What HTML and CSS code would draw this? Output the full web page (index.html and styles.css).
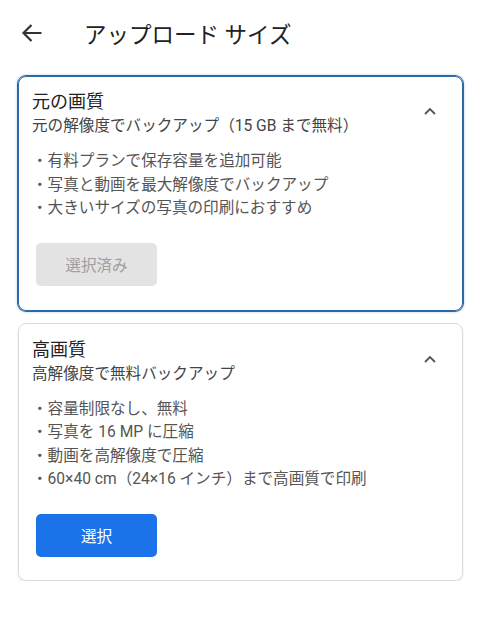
FILE: index.html
```html
<!DOCTYPE html>
<html lang="ja">
<head>
  <meta charset="UTF-8"/>
  <meta name="viewport" content="width=device-width, initial-scale=1.0"/>
  <title>アップロード サイズ</title>
  <link rel="stylesheet" href="styles.css">
</head>
<body>
  <header class="app-bar">
    <button class="back-btn" aria-label="戻る">
      <svg width="22" height="20" viewBox="0 0 22 20">
        <path d="M20.5 10H2.5M10.5 2L2.5 10l8 8" fill="none" stroke="#333" stroke-width="2.2"/>
      </svg>
    </button>
    <h1>アップロード サイズ</h1>
  </header>

  <main class="options">
    <!-- 元の画質 -->
    <section class="option selected">
      <div class="option-head">
        <div>
          <h2>元の画質</h2>
          <p class="sub">元の解像度でバックアップ（15 GB まで無料）</p>
        </div>
        <svg class="chevron" width="14" height="10" viewBox="0 0 14 10">
          <path d="M2 8l5-5 5 5" fill="none" stroke="#555" stroke-width="1.8"/>
        </svg>
      </div>
      <ul>
        <li>・有料プランで保存容量を追加可能</li>
        <li>・写真と動画を最大解像度でバックアップ</li>
        <li>・大きいサイズの写真の印刷におすすめ</li>
      </ul>
      <button class="btn btn-disabled">選択済み</button>
    </section>

    <!-- 高画質 -->
    <section class="option">
      <div class="option-head">
        <div>
          <h2>高画質</h2>
          <p class="sub">高解像度で無料バックアップ</p>
        </div>
        <svg class="chevron" width="14" height="10" viewBox="0 0 14 10">
          <path d="M2 8l5-5 5 5" fill="none" stroke="#555" stroke-width="1.8"/>
        </svg>
      </div>
      <ul>
        <li>・容量制限なし、無料</li>
        <li>・写真を 16 MP に圧縮</li>
        <li>・動画を高解像度で圧縮</li>
        <li>・60×40 cm（24×16 インチ）まで高画質で印刷</li>
      </ul>
      <button class="btn btn-primary">選択</button>
    </section>
  </main>
</body>
</html>
```

FILE: styles.css
```css
:root {
  --blue: #1a73e8;
  --selected: #2b6aa5;
  --border: #dcdcdc;
  --text: #202124;
  --text-sub: #444444;
  --text-muted: #555555;
}

*, *::before, *::after {
  margin: 0;
  padding: 0;
  box-sizing: border-box;
}

body {
  font-family: Roboto, "Noto Sans CJK JP", sans-serif;
  background: #ffffff;
  color: var(--text);
}

/*—— APP BAR ——*/
.app-bar {
  display: flex;
  align-items: center;
  height: 48px;
  margin-top: 9px;
  padding-left: 21px;
}
.back-btn {
  display: flex;
  background: none;
  border: none;
  cursor: pointer;
}
.app-bar h1 {
  margin-left: 41px;
  font-size: 22.5px;
  font-weight: 400;
  color: #222;
}

/*—— OPTIONS ——*/
.options {
  display: flex;
  flex-direction: column;
  gap: 12px;
  padding: 19px 17px 0 18px;
}
.option {
  border: 1px solid var(--border);
  border-radius: 8px;
  padding: 14px 13px 23px;
  box-shadow: 0 1px 2px rgba(0,0,0,0.12);
}
.option.selected {
  border-color: var(--selected);
  box-shadow: 0 0 0 1px var(--selected), 0 0 2px 2px rgba(120,170,220,0.25);
  padding-top: 13px;
  padding-bottom: 24px;
}
.option-head {
  display: flex;
  align-items: center;
  justify-content: space-between;
}
.chevron {
  margin: 0 12px 6px 0;
}
.option h2 {
  font-size: 18px;
  font-weight: 400;
  line-height: 24px;
  color: var(--text);
}
.sub {
  font-size: 15.6px;
  line-height: 24px;
  color: var(--text-sub);
}
.option ul {
  list-style: none;
  margin-top: 12px;
}
.option li {
  font-size: 15.6px;
  line-height: 23.5px;
  color: var(--text-muted);
}

/*—— BUTTONS ——*/
.btn {
  display: block;
  width: 121px;
  height: 43px;
  margin: 22px 0 0 4px;
  border: none;
  border-radius: 5px;
  font-family: inherit;
  font-size: 15.6px;
}
.btn-disabled {
  background: #e3e3e3;
  color: #9e9e9e;
}
.btn-primary {
  background: var(--blue);
  color: #ffffff;
  cursor: pointer;
}
```
